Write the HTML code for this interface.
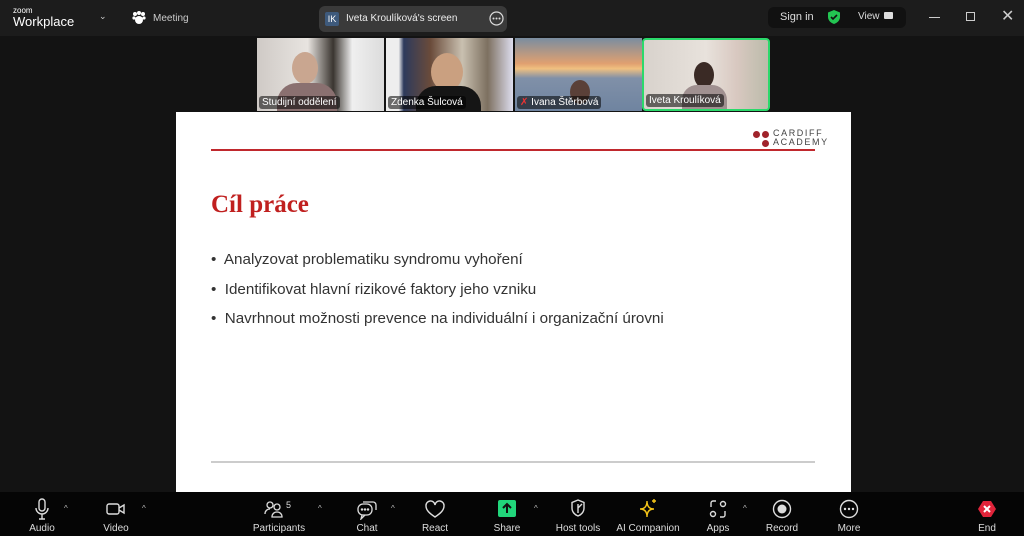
<!DOCTYPE html>
<html><head><meta charset="utf-8"><style>
*{margin:0;padding:0;box-sizing:border-box}
body{width:1024px;height:536px;overflow:hidden;background:#131313;font-family:"Liberation Sans",sans-serif;position:relative;color:#fff}
.abs{position:absolute}
#top{left:0;top:0;width:1024px;height:36px;background:#1c1c1c}
#bot{left:0;top:492px;width:1024px;height:44px;background:#050505}
.tb{position:absolute;top:496px;width:90px;margin-left:-45px;text-align:center;font-size:10px;color:#ddd}
.tb svg{display:block;margin:2px auto 3px;height:22px}
.car{position:absolute;top:504px;font-size:8px;color:#bbb}
.vid{position:absolute;top:38px;height:73px;width:127px;overflow:hidden}
.lbl{position:absolute;left:2px;bottom:2px;background:rgba(0,0,0,.55);font-size:10px;color:#fff;padding:1px 3px;border-radius:3px}
.bul{position:absolute;left:211px;font-size:15.2px;color:#333}
</style></head><body>
<div id="top" class="abs"></div>
<div class="abs" style="left:13px;top:6px;font-size:8px;color:#fff">zoom</div>
<div class="abs" style="left:13px;top:14px;font-size:13px;color:#fff">Workplace</div>
<div class="abs" style="left:99px;top:11px;font-size:9px;color:#ccc">⌄</div>
<svg class="abs" style="left:132px;top:11px" width="14" height="14" viewBox="0 0 14 14" fill="#fff"><circle cx="3" cy="3" r="2"/><circle cx="11" cy="3" r="2"/><circle cx="7" cy="2" r="2"/><circle cx="2" cy="7" r="1.6"/><circle cx="12" cy="7" r="1.6"/><ellipse cx="7" cy="9" rx="4" ry="4"/></svg>
<div class="abs" style="left:153px;top:13px;font-size:10px;color:#ccc">Meeting</div>
<div class="abs" style="left:319px;top:6px;width:188px;height:26px;background:#3a3a3a;border-radius:6px"></div>
<div class="abs" style="left:325px;top:12px;width:14px;height:14px;background:#3e5a7c;border-radius:2px;font-size:9px;text-align:center;line-height:14px">IK</div>
<div class="abs" style="left:346px;top:13px;font-size:10px;color:#eee">Iveta Kroulíková's screen</div>
<svg class="abs" style="left:489px;top:11px" width="15" height="15" viewBox="0 0 15 15"><circle cx="7.5" cy="7.5" r="6.5" fill="none" stroke="#ddd" stroke-width="1.2"/><circle cx="4.5" cy="7.5" r="1" fill="#ddd"/><circle cx="7.5" cy="7.5" r="1" fill="#ddd"/><circle cx="10.5" cy="7.5" r="1" fill="#ddd"/></svg>
<div class="abs" style="left:768px;top:7px;width:138px;height:21px;background:#111;border-radius:6px"></div>
<div class="abs" style="left:780px;top:11px;font-size:11px;color:#ddd">Sign in</div>
<svg class="abs" style="left:827px;top:9px" width="14" height="16" viewBox="0 0 14 16"><path d="M7 1L1 3.5V8c0 3.5 3 6 6 7 3-1 6-3.5 6-7V3.5z" fill="#23c552"/><path d="M4 8l2 2 4-4" stroke="#111" stroke-width="1.6" fill="none"/></svg>
<div class="abs" style="left:858px;top:11px;font-size:10px;color:#ddd">View</div>
<div class="abs" style="left:884px;top:12px;width:9px;height:7px;background:#ddd;border-radius:1px"></div>
<div class="abs" style="left:929px;top:17px;width:11px;height:1px;background:#ccc"></div>
<div class="abs" style="left:966px;top:12px;width:9px;height:9px;border:1px solid #ccc"></div>
<div class="abs" style="left:1001px;top:6px;font-size:16px;color:#ccc">✕</div>

<div class="vid" style="left:257px;background:linear-gradient(90deg,#cfcac6 0,#e8e4e0 40%,#3a3530 60%,#efefef 75%,#dcdcdc 100%)"><div class="abs" style="left:35px;top:14px;width:26px;height:32px;border-radius:50%;background:#c9a690"></div><div class="abs" style="left:20px;top:45px;width:60px;height:30px;background:#8a7070;border-radius:20px 20px 0 0"></div><div class="lbl">Studijní oddělení</div></div>
<div class="vid" style="left:386px;background:linear-gradient(90deg,#eee 0,#eee 10%,#2d3a5c 14%,#6a4b3a 35%,#c9c0b0 60%,#7d7060 80%,#dde 100%)"><div class="abs" style="left:45px;top:15px;width:32px;height:38px;border-radius:50%;background:#caa080"></div><div class="abs" style="left:30px;top:48px;width:65px;height:30px;background:#151515;border-radius:20px 20px 0 0"></div><div class="lbl">Zdenka Šulcová</div></div>
<div class="vid" style="left:515px;background:linear-gradient(180deg,#7a8da0 0,#e0a070 35%,#f0c080 42%,#8090a8 55%,#6f84a0 100%)"><div class="abs" style="left:55px;top:42px;width:20px;height:24px;border-radius:50%;background:#5a4038"></div><div class="lbl"><span style="color:#e33">✗</span> Ivana Štěrbová</div></div>
<div class="vid" style="left:642px;width:128px;border:2px solid #2bd96b;border-radius:4px;background:linear-gradient(90deg,#d8d2cc 0,#e8e2dc 50%,#d8c8c0 75%,#bba 100%)"><div class="abs" style="left:50px;top:22px;width:20px;height:26px;border-radius:50%;background:#3a2a25"></div><div class="abs" style="left:38px;top:45px;width:45px;height:30px;background:#a09090;border-radius:15px 15px 0 0"></div><div class="lbl">Iveta Kroulíková</div></div>

<div class="abs" style="left:176px;top:112px;width:675px;height:380px;background:#fff"></div>
<div class="abs" style="left:211px;top:149px;width:604px;height:2px;background:#c0282d"></div>
<div class="abs" style="left:753px;top:131px;width:7px;height:7px;border-radius:50%;background:#a0232b"></div>
<div class="abs" style="left:762px;top:131px;width:7px;height:7px;border-radius:50%;background:#a0232b"></div>
<div class="abs" style="left:762px;top:140px;width:7px;height:7px;border-radius:50%;background:#a0232b"></div>
<div class="abs" style="left:773px;top:129px;font-size:9px;letter-spacing:1.6px;color:#444;line-height:9px">CARDIFF<br>ACADEMY</div>
<div class="abs" style="left:211px;top:191px;font-family:'Liberation Serif',serif;font-weight:bold;font-size:25px;color:#c0201f">Cíl práce</div>
<div class="bul" style="top:251px">•&nbsp; Analyzovat problematiku syndromu vyhoření</div>
<div class="bul" style="top:281px">•&nbsp; Identifikovat hlavní rizikové faktory jeho vzniku</div>
<div class="bul" style="top:310px">•&nbsp; Navrhnout možnosti prevence na individuální i organizační úrovni</div>
<div class="abs" style="left:211px;top:461px;width:604px;height:2px;background:#ccc"></div>

<div id="bot" class="abs"></div>
<div class="tb" style="left:42px"><svg width="14" viewBox="0 0 14 22" fill="none" stroke="#ddd" stroke-width="1.4"><rect x="4" y="1" width="6" height="12" rx="3"/><path d="M1 10a6 6 0 0 0 12 0M7 16v5M4 21h6"/></svg>Audio</div>
<div class="car" style="left:64px">^</div>
<div class="tb" style="left:116px"><svg width="20" viewBox="0 0 20 22" fill="none" stroke="#ddd" stroke-width="1.4"><rect x="1" y="6" width="12" height="10" rx="2"/><path d="M13 10l5-3v8l-5-3"/></svg>Video</div>
<div class="car" style="left:142px">^</div>
<div class="tb" style="left:279px"><svg width="30" viewBox="0 0 30 22" fill="none" stroke="#ddd" stroke-width="1.3"><circle cx="6" cy="7" r="3"/><circle cx="13" cy="9" r="3"/><path d="M1 16c0-3 2-5 5-5M8 19c0-3 2-5 5-5s5 2 5 5z"/><text x="22" y="10" font-size="9" fill="#ddd" stroke="none" font-family="Liberation Sans">5</text></svg>Participants</div>
<div class="car" style="left:318px">^</div>
<div class="tb" style="left:367px"><svg width="20" viewBox="0 0 20 22" fill="none" stroke="#ddd" stroke-width="1.3"><path d="M6 4h10a3 3 0 0 1 3 3v5"/><rect x="1" y="6" width="14" height="11" rx="5"/><path d="M5 17l-1 4 4-4"/><circle cx="5" cy="11.5" r=".6" fill="#ddd"/><circle cx="8" cy="11.5" r=".6" fill="#ddd"/><circle cx="11" cy="11.5" r=".6" fill="#ddd"/></svg>Chat</div>
<div class="car" style="left:391px">^</div>
<div class="tb" style="left:435px"><svg width="20" viewBox="0 0 20 22" fill="none" stroke="#ddd" stroke-width="1.4"><path d="M10 19C4 15 1 12 1 8a4.5 4.5 0 0 1 9-1 4.5 4.5 0 0 1 9 1c0 4-3 7-9 11z"/></svg>React</div>
<div class="tb" style="left:507px"><svg width="18" viewBox="0 0 18 22"><rect x="0" y="2" width="18" height="17" rx="2" fill="#21d67b"/><path d="M9 15V6M5 10l4-4 4 4" stroke="#111" stroke-width="2" fill="none"/></svg>Share</div>
<div class="car" style="left:534px">^</div>
<div class="tb" style="left:578px"><svg width="16" viewBox="0 0 16 22" fill="none" stroke="#ddd" stroke-width="1.4"><path d="M8 2L2 4.5V10c0 4 3 7 6 8 3-1 6-4 6-8V4.5z"/><path d="M8 6v9M8 10l4-4" /></svg>Host tools</div>
<div class="tb" style="left:648px"><svg width="20" viewBox="0 0 20 22" fill="none" stroke="#f5c518" stroke-width="1.4"><path d="M9 3c0 5 2 8 7 8-5 0-7 3-7 8 0-5-2-8-7-8 5 0 7-3 7-8z"/><path d="M16 1v4M14 3h4"/></svg>AI Companion</div>
<div class="tb" style="left:718px"><svg width="20" viewBox="0 0 20 22" fill="none" stroke="#ddd" stroke-width="1.4"><path d="M3 9V5a2 2 0 0 1 2-2h3M17 13v4a2 2 0 0 1-2 2h-3"/><circle cx="15" cy="6" r="2.5"/><circle cx="5" cy="16" r="2.5"/></svg>Apps</div>
<div class="car" style="left:743px">^</div>
<div class="tb" style="left:782px"><svg width="20" viewBox="0 0 20 22"><circle cx="10" cy="11" r="8.5" fill="none" stroke="#ddd" stroke-width="1.4"/><circle cx="10" cy="11" r="4.5" fill="#ddd"/></svg>Record</div>
<div class="tb" style="left:849px"><svg width="20" viewBox="0 0 20 22"><circle cx="10" cy="11" r="8.5" fill="none" stroke="#ddd" stroke-width="1.4"/><circle cx="6" cy="11" r="1.2" fill="#ddd"/><circle cx="10" cy="11" r="1.2" fill="#ddd"/><circle cx="14" cy="11" r="1.2" fill="#ddd"/></svg>More</div>
<div class="tb" style="left:987px"><svg width="20" viewBox="0 0 20 22"><path d="M6 3h8l5 8-5 8H6l-5-8z" fill="#e0243a"/><path d="M7 8l6 6M13 8l-6 6" stroke="#fff" stroke-width="2"/></svg>End</div>
</body></html>
